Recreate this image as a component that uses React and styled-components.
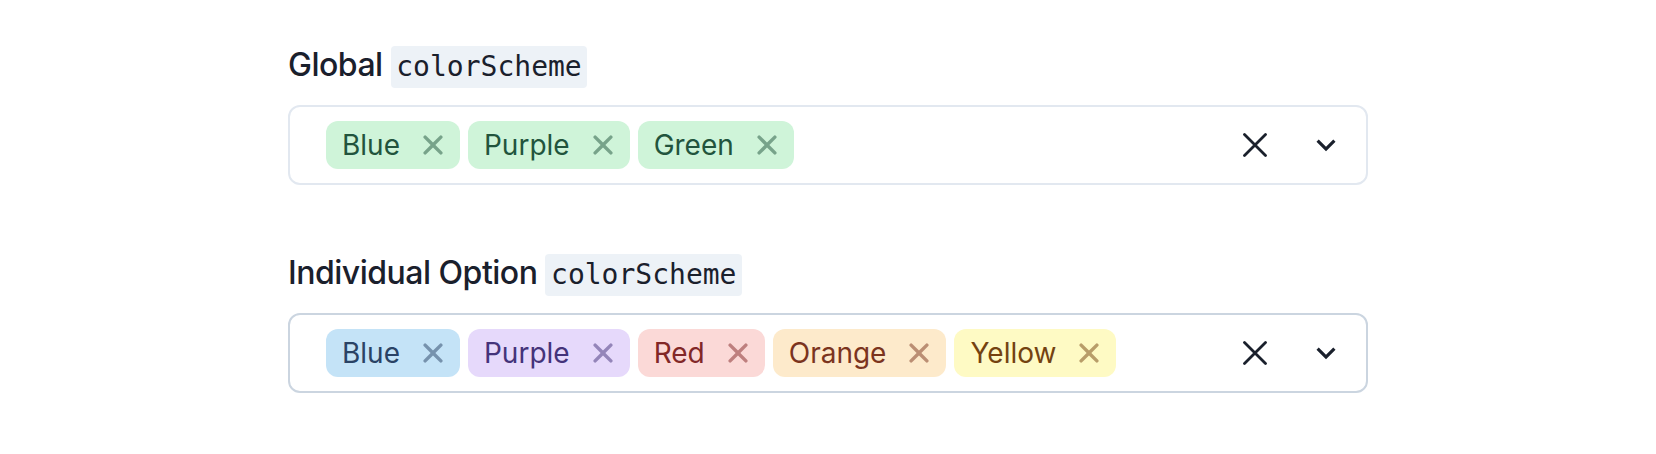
import React from "react";
import styled, { createGlobalStyle } from "styled-components";

const GlobalStyle = createGlobalStyle`
  body {
    margin: 0;
    background: #ffffff;
    font-family: Inter, "Noto Sans", sans-serif;
    color: #1a202c;
  }
`;

const Page = styled.div`
  width: 1080px;
  margin: 0 auto;
  padding-top: 41px;
`;

const Field = styled.div`
  & + & {
    margin-top: 64px;
  }
`;

const Label = styled.label`
  display: block;
  font-size: 32px;
  font-weight: 500;
  line-height: 48px;
  margin-bottom: 16px;
  letter-spacing: -0.5px;
`;

const Code = styled.code`
  display: inline-block;
  font-family: "DejaVu Sans Mono", monospace;
  font-size: 28px;
  line-height: 42px;
  padding: 0 0.2em;
  border-radius: 4px;
  background: #edf2f7;
  color: #1a202c;
  letter-spacing: 0;
`;

const Control = styled.div`
  display: flex;
  align-items: center;
  height: 80px;
  box-sizing: border-box;
  border: 2px solid ${(p) => (p.$hover ? "#cbd5e0" : "#e2e8f0")};
  border-radius: 12px;
  background: #fff;
`;

const Values = styled.div`
  flex: 1;
  display: flex;
  align-items: center;
  padding: 4px 32px;
`;

const palette = {
  blue: { bg: "#c4e3f7", fg: "#2a4365" },
  purple: { bg: "#e6d9fb", fg: "#44337a" },
  green: { bg: "#cff4d9", fg: "#22543d" },
  red: { bg: "#fbd9d7", fg: "#822727" },
  orange: { bg: "#fdeacb", fg: "#7b341e" },
  yellow: { bg: "#fefac4", fg: "#744210" },
};

const Tag = styled.span`
  display: inline-flex;
  align-items: center;
  height: 48px;
  margin: 0 4px;
  padding: 0 16px;
  border-radius: 12px;
  font-size: 28px;
  font-weight: 400;
  background: ${(p) => palette[p.$c].bg};
  color: ${(p) => palette[p.$c].fg};
`;

const TagClose = styled.span`
  display: inline-flex;
  align-items: center;
  justify-content: center;
  width: 40px;
  height: 40px;
  margin-left: 13px;
  margin-right: -9px;
  opacity: 0.5;
`;

const Indicators = styled.div`
  display: flex;
  align-items: center;
  height: 100%;
`;

const ClearButton = styled.span`
  display: flex;
  align-items: center;
  justify-content: center;
  width: 40px;
  margin-right: 11px;
  color: #1a202c;
`;

const DropButton = styled.span`
  display: flex;
  align-items: center;
  justify-content: center;
  width: 80px;
  height: 100%;
  color: #1a202c;
`;

const TagCloseIcon = () => (
  <svg width="36" height="36" viewBox="0 0 512 512">
    <path
      fill="currentColor"
      d="M289.94 256l95-95A24 24 0 00351 127l-95 95-95-95a24 24 0 00-34 34l95 95-95 95a24 24 0 1034 34l95-95 95 95a24 24 0 0034-34z"
    />
  </svg>
);

const CloseIcon = () => (
  <svg width="24" height="24" viewBox="0 0 24 24">
    <path
      d="M1.5 1.5L22.5 22.5M22.5 1.5L1.5 22.5"
      stroke="currentColor"
      strokeWidth="2.8"
      strokeLinecap="round"
      fill="none"
    />
  </svg>
);

const ChevronIcon = () => (
  <svg width="38" height="38" viewBox="0 0 24 24">
    <path fill="currentColor" d="M16.59 8.59L12 13.17 7.41 8.59 6 10l6 6 6-6z" />
  </svg>
);

const fields = [
  {
    label: "Global",
    hover: false,
    tags: [
      ["Blue", "green"],
      ["Purple", "green"],
      ["Green", "green"],
    ],
  },
  {
    label: "Individual Option",
    hover: true,
    tags: [
      ["Blue", "blue"],
      ["Purple", "purple"],
      ["Red", "red"],
      ["Orange", "orange"],
      ["Yellow", "yellow"],
    ],
  },
];

export default function App() {
  return (
    <>
      <GlobalStyle />
      <Page>
        {fields.map((f) => (
          <Field key={f.label}>
            <Label>
              {f.label} <Code>colorScheme</Code>
            </Label>
            <Control $hover={f.hover}>
              <Values>
                {f.tags.map(([text, c]) => (
                  <Tag key={text} $c={c}>
                    {text}
                    <TagClose>
                      <TagCloseIcon />
                    </TagClose>
                  </Tag>
                ))}
              </Values>
              <Indicators>
                <ClearButton>
                  <CloseIcon />
                </ClearButton>
                <DropButton>
                  <ChevronIcon />
                </DropButton>
              </Indicators>
            </Control>
          </Field>
        ))}
      </Page>
    </>
  );
}
